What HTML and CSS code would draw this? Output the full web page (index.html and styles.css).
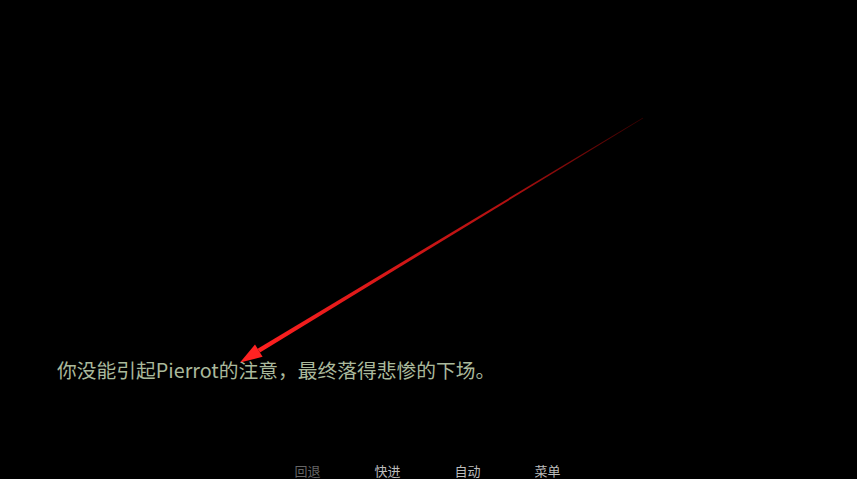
FILE: index.html
```html
<!DOCTYPE html>
<html lang="zh">
<head>
<meta charset="utf-8">
<link rel="stylesheet" href="styles.css">
</head>
<body>
<div class="stage">
  <svg class="arrow" width="857" height="479" viewBox="0 0 857 479">
    <defs>
      <linearGradient id="g" gradientUnits="userSpaceOnUse" x1="643" y1="118" x2="258" y2="351">
        <stop offset="0" stop-color="#3a0000"/>
        <stop offset="0.35" stop-color="#b01010"/>
        <stop offset="1" stop-color="#ff2020"/>
      </linearGradient>
    </defs>
    <polygon points="643.2,118.2 642.8,117.8 257.6,348.7 260.0,352.5" fill="url(#g)"/>
    <polygon points="240,362.5 255.0,344.4 262.6,356.8" fill="#ff2222"/>
  </svg>
  <p class="dialog">你没能引起Pierrot的注意，最终落得悲惨的下场。</p>
  <nav class="menu">
    <span class="item dim">回退</span>
    <span class="item">快进</span>
    <span class="item">自动</span>
    <span class="item">菜单</span>
  </nav>
</div>
</body>
</html>
```

FILE: styles.css
```css
html, body {
  margin: 0;
  padding: 0;
  background: #000;
  width: 857px;
  height: 479px;
  overflow: hidden;
}
.stage {
  position: relative;
  width: 857px;
  height: 479px;
  display: flex;
  flex-direction: column;
  font-family: "Noto Sans CJK SC", "Noto Sans", sans-serif;
}
.arrow {
  position: absolute;
  left: 0;
  top: 0;
}
.dialog {
  margin: 355px 0 0 57px;
  font-size: 19.75px;
  line-height: 30px;
  color: #aab99c;
}
.menu {
  display: flex;
  justify-content: center;
  gap: 54px;
  margin-top: 77px;
  padding-right: 2px;
}
.item {
  font-size: 13px;
  line-height: 18px;
  color: #bdbdbd;
}
.item.dim {
  color: #666666;
}
```
